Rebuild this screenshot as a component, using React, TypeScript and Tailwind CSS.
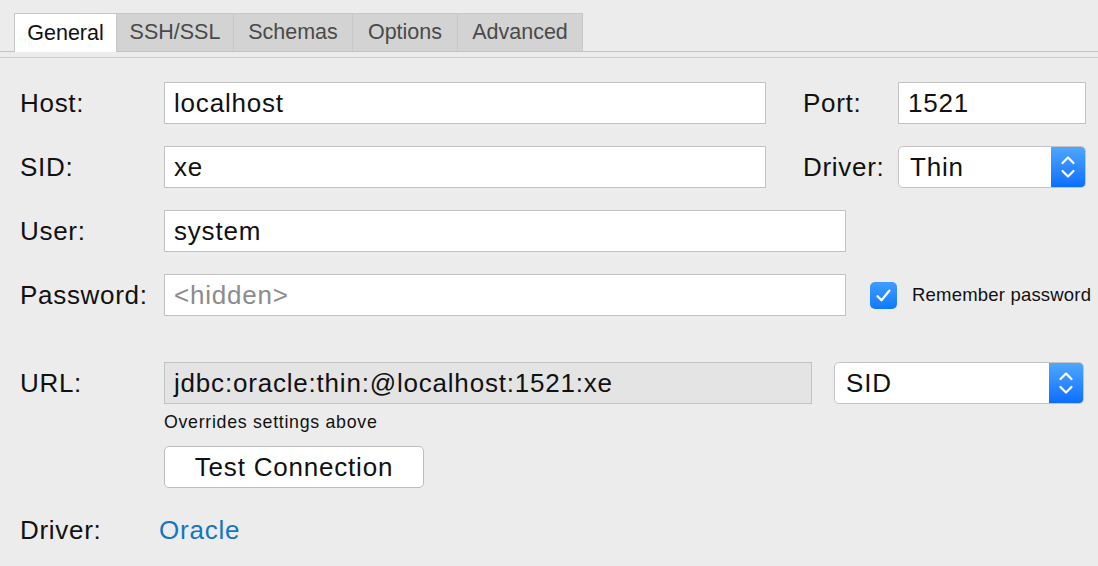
import React from "react";

const font = "font-['Liberation_Sans',Arial,sans-serif]";

function Chevrons() {
  return (
    <svg width="16" height="26" viewBox="0 0 16 26" fill="none">
      <path d="M2.5 9 L8 3.5 L13.5 9" stroke="white" strokeWidth="2.2" strokeLinecap="round" strokeLinejoin="round" />
      <path d="M2.5 17 L8 22.5 L13.5 17" stroke="white" strokeWidth="2.2" strokeLinecap="round" strokeLinejoin="round" />
    </svg>
  );
}

function Select({ value, width }: { value: string; width: string }) {
  return (
    <div className={`${width} h-[42px] flex rounded-[5px] border border-[#c3c3c3] bg-white overflow-hidden`}>
      <div className="flex-1 flex items-center pl-[11px] text-[26px] tracking-[0.8px] text-[#111]">{value}</div>
      <div className="w-[34px] h-full flex items-center justify-center bg-gradient-to-b from-[#4ea6ff] to-[#0a6dff]">
        <Chevrons />
      </div>
    </div>
  );
}

function Input({ value, width, placeholder, gray }: { value?: string; width: string; placeholder?: string; gray?: boolean }) {
  return (
    <div
      className={`${width} h-[42px] flex items-center border border-[#c2c2c2] ${gray ? "bg-[#e4e4e4]" : "bg-white"} pl-[9px] text-[26px] tracking-[0.8px] ${placeholder ? "text-[#8c8c8c]" : "text-[#111]"}`}
    >
      {value ?? placeholder}
    </div>
  );
}

function Label({ children, className = "" }: { children: React.ReactNode; className?: string }) {
  return <div className={`text-[26px] tracking-[0.7px] text-[#111] ${className}`}>{children}</div>;
}

export default function App() {
  const tabs = ["General", "SSH/SSL", "Schemas", "Options", "Advanced"];
  const widths = ["w-[102px]", "w-[117px]", "w-[119px]", "w-[105px]", "w-[126px]"];
  return (
    <div className={`w-[1098px] h-[566px] bg-[#ececec] overflow-hidden ${font}`}>
      {/* tabs */}
      <div className="pt-[13px] pl-[14px] flex border-b border-[#c4c4c4] h-[52px]">
        {tabs.map((t, i) => (
          <div
            key={t}
            className={`${widths[i]} h-[38px] flex items-center justify-center text-[21.5px] border-t border-l ${i === tabs.length - 1 ? "border-r" : ""} border-[#c8c8c8] ${
              i === 0 ? "bg-white text-[#111] h-[39px] relative z-10" : "bg-[#d3d3d3] text-[#4a4a4a]"
            }`}
          >
            {t}
          </div>
        ))}
      </div>
      <div className="mt-[5px] border-t border-[#cdcdcd] h-[1px] bg-[#f7f7f7]" />

      {/* form */}
      <div className="pl-[20px] pt-[24px]">
        <div className="flex items-center h-[42px]">
          <Label className="w-[144px]">Host:</Label>
          <Input value="localhost" width="w-[602px]" />
          <Label className="w-[95px] ml-[37px]">Port:</Label>
          <Input value="1521" width="w-[188px]" />
        </div>
        <div className="flex items-center h-[42px] mt-[22px]">
          <Label className="w-[144px]">SID:</Label>
          <Input value="xe" width="w-[602px]" />
          <Label className="w-[95px] ml-[37px]">Driver:</Label>
          <Select value="Thin" width="w-[188px]" />
        </div>
        <div className="flex items-center h-[42px] mt-[22px]">
          <Label className="w-[144px]">User:</Label>
          <Input value="system" width="w-[682px]" />
        </div>
        <div className="flex items-center h-[42px] mt-[22px]">
          <Label className="w-[144px]">Password:</Label>
          <Input placeholder="<hidden>" width="w-[682px]" />
          <div className="ml-[24px] w-[27px] h-[27px] rounded-[5px] bg-gradient-to-b from-[#3d9dff] to-[#0b79ff] flex items-center justify-center">
            <svg width="17" height="15" viewBox="0 0 17 15" fill="none">
              <path d="M2.5 8.2 L6.5 12.3 L14.5 2.5" stroke="white" strokeWidth="2.2" strokeLinecap="round" strokeLinejoin="round" />
            </svg>
          </div>
          <div className="ml-[15px] text-[18.5px] tracking-[0.2px] text-[#111] whitespace-nowrap">Remember password</div>
        </div>
        <div className="flex items-center h-[42px] mt-[46px]">
          <Label className="w-[144px]">URL:</Label>
          <Input value="jdbc:oracle:thin:@localhost:1521:xe" width="w-[648px]" gray />
          <div className="ml-[22px]">
            <Select value="SID" width="w-[250px]" />
          </div>
        </div>
        <div className="ml-[144px] mt-[8px] h-[20px] flex items-center text-[17.8px] tracking-[0.7px] text-[#111]">
          Overrides settings above
        </div>
        <div className="ml-[144px] mt-[14px] w-[260px] h-[42px] rounded-[5px] border border-[#bdbdbd] bg-white flex items-center justify-center text-[26px] tracking-[0.8px] text-[#111]">
          Test Connection
        </div>
        <div className="flex items-center h-[42px] mt-[21px]">
          <Label className="w-[139px]">Driver:</Label>
          <div className="text-[26px] tracking-[0.8px] text-[#1475c2]">Oracle</div>
        </div>
      </div>
    </div>
  );
}
